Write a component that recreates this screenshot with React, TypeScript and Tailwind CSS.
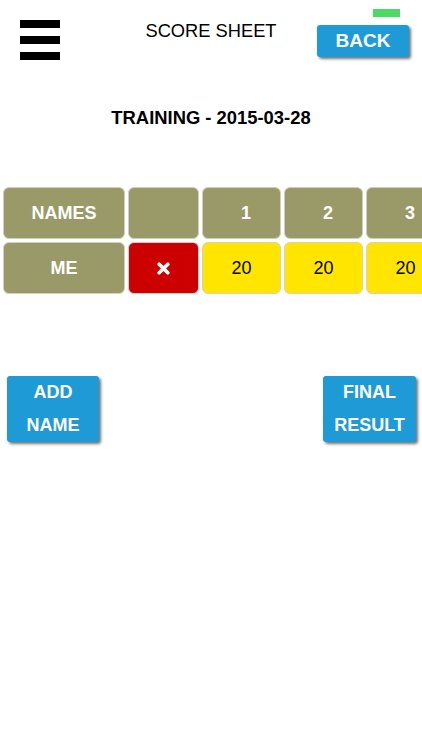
import React from "react";

const font = { fontFamily: '"Liberation Sans", Arial, Helvetica, sans-serif' };

function Cross() {
  return (
    <svg width="13" height="13" viewBox="0 0 13 13">
      <path d="M2.2 2.2 L10.8 10.8 M10.8 2.2 L2.2 10.8" stroke="#fff" strokeWidth="3.6" strokeLinecap="round" />
    </svg>
  );
}

function HeadCell({ w, extra = "", children }: { w: string; extra?: string; children?: React.ReactNode }) {
  return (
    <div
      className={`${w} ${extra} h-[52px] shrink-0 rounded-[6px] border border-[#cfcfc6] bg-[#9a9a68] flex items-center justify-center text-white font-bold text-[18px]`}
    >
      {children}
    </div>
  );
}

export default function App() {
  const rounds = [1, 2, 3];
  return (
    <div className="w-[422px] h-[750px] bg-white overflow-hidden text-black" style={font}>
      {/* top bar */}
      <div className="grid grid-cols-[1fr_auto_1fr] items-start">
        <div className="pl-[20px] pt-[20px] flex flex-col gap-[8px]">
          <div className="w-[40px] h-[8px] bg-black" />
          <div className="w-[40px] h-[8px] bg-black" />
          <div className="w-[40px] h-[8px] bg-black" />
        </div>
        <div className="pt-[19px] text-[18.3px] leading-[24px]">SCORE SHEET</div>
        <div className="flex flex-col items-end pr-[13px] pt-[9px]">
          <div className="w-[27px] h-[8px] bg-[#4cd964] mr-[9px]" />
          <button className="mt-[8px] w-[92px] h-[32px] rounded-[3px] bg-[#1e9ad6] text-white font-bold text-[19px] leading-[32px] shadow-[2px_2px_3px_rgba(0,0,0,0.55)]">
            BACK
          </button>
        </div>
      </div>

      <div className="mt-[46px] text-center font-bold text-[18.4px] leading-[24px]">TRAINING - 2015-03-28</div>

      {/* score table */}
      <div className="mt-[57px] pl-[3px] flex flex-col gap-[3px] overflow-hidden">
        <div className="flex gap-[3px]">
          <HeadCell w="w-[122px]">NAMES</HeadCell>
          <HeadCell w="w-[71px]" />
          {rounds.map((r) => (
            <HeadCell key={r} w="w-[79px]" extra="pl-[9px]">
              {r}
            </HeadCell>
          ))}
        </div>
        <div className="flex gap-[3px]">
          <HeadCell w="w-[122px]">ME</HeadCell>
          <div className="w-[71px] h-[52px] shrink-0 rounded-[6px] border border-[#cfcfc6] bg-[#cc0000] flex items-center justify-center">
            <Cross />
          </div>
          {rounds.map((r) => (
            <div
              key={r}
              className="w-[79px] h-[52px] shrink-0 rounded-[6px] border border-[#d6d3b8] bg-[#ffe500] flex items-center justify-center text-[18px]"
            >
              20
            </div>
          ))}
        </div>
      </div>

      {/* actions */}
      <div className="mt-[82px] flex justify-between pl-[7px] pr-[6px]">
        <button className="w-[92px] h-[66px] rounded-[3px] bg-[#1e9ad6] text-white font-bold text-[18px] leading-[33px] shadow-[2px_2px_3px_rgba(0,0,0,0.55)]">
          ADD
          <br />
          NAME
        </button>
        <button className="w-[93px] h-[66px] rounded-[3px] bg-[#1e9ad6] text-white font-bold text-[18px] leading-[33px] shadow-[2px_2px_3px_rgba(0,0,0,0.55)]">
          FINAL
          <br />
          RESULT
        </button>
      </div>
    </div>
  );
}
